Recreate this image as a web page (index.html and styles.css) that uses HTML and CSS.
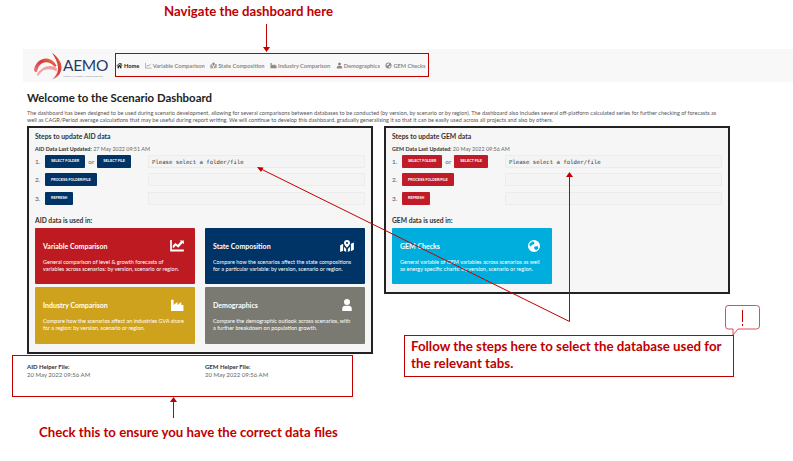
FILE: index.html
```html
<!DOCTYPE html>
<html lang="en">
<head>
    <meta charset="UTF-8">
    <title>Scenario Dashboard</title>
    <link rel="stylesheet" href="styles.css">
</head>
<body>

    <div class="navbar">
        <div class="logo">
            <svg class="logo-mark" viewBox="0 0 32 30">
                <defs>
                    <linearGradient id="swoosh" x1="0" y1="1" x2="1" y2="0">
                        <stop offset="0" stop-color="#e9808a"/>
                        <stop offset="0.55" stop-color="#d8343c"/>
                        <stop offset="1" stop-color="#f08a3c"/>
                    </linearGradient>
                </defs>
                <path d="M20 2C25 5 30 11 29.500 17C29 23 25 27 20 28.500C24 25 26.500 21 26 16C25.500 11 23 6 20 2Z" fill="url(#swoosh)"/>
                <path d="M2 19C3 12 8 8 14 7.500C18 7.500 22 10 24.500 14.500L23 16C20 12.500 16 10.500 12 11.500C8 12.500 6 16 5 21C3.500 21.500 2 20.500 2 19Z" fill="url(#swoosh)"/>
                <path d="M5 23.500C8 18 13 15 18 15C21 15 23.500 16 25 17.500L24.500 20.500C21 18 16 17.500 12 19C10 20 8 22 6.500 24.500C6 25 5 24.500 5 23.500Z" fill="#eea0a0"/>
            </svg>
            <div class="logo-text">
                <span class="logo-name">AEMO</span>
                <span class="logo-sub">AUSTRALIAN ENERGY MARKET OPERATOR</span>
            </div>
        </div>
        <div class="nav-links">
            <a class="nav-link active">
                <svg class="nav-icon" viewBox="0 0 16 16"><path d="M8 2L1 8.500L2 9.500L8 4L14 9.500L15 8.500L12.500 6V2.500H10.500V4.200ZM3.500 10V14.500H7V11H9V14.500H12.500V10L8 5.800Z"/></svg>Home
            </a>
            <a class="nav-link">
                <svg class="nav-icon" viewBox="0 0 16 16"><path d="M1 2V14H15" fill="none" stroke="currentColor" stroke-width="1.400"/><path d="M3.500 11L6.500 7L9 9L13.500 4" fill="none" stroke="currentColor" stroke-width="1.400"/></svg>Variable Comparison
            </a>
            <a class="nav-link">
                <svg class="nav-icon" viewBox="0 0 16 16"><path d="M8 1A3 3 0 0 0 5 4C5 6 8 9 8 9C8 9 11 6 11 4A3 3 0 0 0 8 1ZM1 6L4 5V14L1 15ZM5 8L7 10V15L5 14ZM9 10L11 8V14L9 15ZM12 5L15 4V13L12 14Z"/></svg>State Composition
            </a>
            <a class="nav-link">
                <svg class="nav-icon" viewBox="0 0 16 16"><path d="M1 2H4V8L8 5V8L12 5V8H15V14H1Z"/></svg>Industry Comparison
            </a>
            <a class="nav-link">
                <svg class="nav-icon" viewBox="0 0 16 16"><circle cx="8" cy="4.500" r="3.500"/><path d="M2 15V12C2 10 4 9 5.500 9H10.500C12 9 14 10 14 12V15Z"/></svg>Demographics
            </a>
            <a class="nav-link">
                <svg class="nav-icon" viewBox="0 0 16 16"><path fill-rule="evenodd" d="M8 1A7 7 0 1 0 8 15A7 7 0 0 0 8 1ZM4 5L8 3L10 4L9 6L7 6.500L5.500 8.500L3.500 7.500ZM9 9L13 8.500L12.500 11.500L10 13L8.500 11.500Z"/></svg>GEM Checks
            </a>
        </div>
    </div>

    <div class="content">
        <h1>Welcome to the Scenario Dashboard</h1>
        <p class="intro">The dashboard has been designed to be used during scenario development, allowing for several comparisons between databases to be conducted (by version, by scenario or by region). The dashboard also includes several off-platform calculated series for further checking of forecasts as well as CAGR/Period average calculations that may be useful during report writing. We will continue to develop this dashboard, gradually generalising it so that it can be easily used across all projects and also by others.</p>

        <div class="panels">
            <div class="panel">
                <h3>Steps to update AID data</h3>
                <p class="updated"><b>AID Data Last Updated:</b> 27 May 2022 09:51 AM</p>
                <div class="steps">
                    <div class="step"><span class="num">1.</span><a class="btn">SELECT FOLDER</a><span class="or">or</span><a class="btn">SELECT FILE</a></div>
                    <div class="output">Please select a folder/file</div>
                    <div class="step"><span class="num">2.</span><a class="btn">PROCESS FOLDER/FILE</a></div>
                    <div class="output"></div>
                    <div class="step"><span class="num">3.</span><a class="btn">REFRESH</a></div>
                    <div class="output"></div>
                </div>
                <h4>AID data is used in:</h4>
                <div class="cards">
                    <div class="card red">
                        <div class="card-head">
                            <span>Variable Comparison</span>
                            <svg class="card-icon" viewBox="0 0 16 14"><path d="M0 0H2V11H16V13.500H0Z"/><path d="M3 9V6.500L6 3.500L9 5.500L12.500 1.500L11 0.500H16V5L14.500 3.500L9.500 9L6.500 6.500L4.500 9Z"/></svg>
                        </div>
                        <p>General comparison of level &amp; growth forecasts of variables across scenarios: by version, scenario or region.</p>
                    </div>
                    <div class="card blue">
                        <div class="card-head">
                            <span>State Composition</span>
                            <svg class="card-icon" viewBox="0 0 16 14"><path fill-rule="evenodd" d="M8 0A3.500 3.500 0 0 0 4.500 3.500C4.500 5.500 8 9 8 9C8 9 11.500 5.500 11.500 3.500A3.500 3.500 0 0 0 8 0ZM8 2.300A1.200 1.200 0 1 1 8 4.700A1.200 1.200 0 0 1 8 2.300Z"/><path d="M0 6L3.500 4.500V12.500L0 14ZM4.500 8L7 10.500V14L4.500 12.500ZM9 10.500L11.500 8V12.500L9 14ZM12.500 4.500L16 3V11.500L12.500 13Z"/></svg>
                        </div>
                        <p>Compare how the scenarios affect the state compositions for a particular variable: by version, scenario or region.</p>
                    </div>
                    <div class="card gold">
                        <div class="card-head">
                            <span>Industry Comparison</span>
                            <svg class="card-icon" viewBox="0 0 16 14"><path d="M1 1H4V7L8.500 3.500V7L13 3.500V7H15.500V14H1Z"/></svg>
                        </div>
                        <p>Compare how the scenarios affect an industries GVA share for a region: by version, scenario or region.</p>
                    </div>
                    <div class="card grey">
                        <div class="card-head">
                            <span>Demographics</span>
                            <svg class="card-icon" viewBox="0 0 16 14"><circle cx="8" cy="3.500" r="3.500"/><path d="M2.500 14V11C2.500 9 4 8 5.500 8H10.500C12 8 13.500 9 13.500 11V14Z"/></svg>
                        </div>
                        <p>Compare the demographic outlook across scenarios, with a further breakdown on population growth.</p>
                    </div>
                </div>
            </div>

            <div class="panel">
                <h3>Steps to update GEM data</h3>
                <p class="updated"><b>GEM Data Last Updated:</b> 20 May 2022 09:56 AM</p>
                <div class="steps red-btns">
                    <div class="step"><span class="num">1.</span><a class="btn">SELECT FOLDER</a><span class="or">or</span><a class="btn">SELECT FILE</a></div>
                    <div class="output">Please select a folder/file</div>
                    <div class="step"><span class="num">2.</span><a class="btn">PROCESS FOLDER/FILE</a></div>
                    <div class="output"></div>
                    <div class="step"><span class="num">3.</span><a class="btn">REFRESH</a></div>
                    <div class="output"></div>
                </div>
                <h4>GEM data is used in:</h4>
                <div class="cards">
                    <div class="card cyan">
                        <div class="card-head">
                            <span>GEM Checks</span>
                            <svg class="card-icon" viewBox="0 0 16 14"><path fill-rule="evenodd" d="M8 0A7 7 0 1 0 8 14A7 7 0 0 0 8 0ZM3 4L6.500 1.500L8.500 2.500L8 5L5.500 5.500L4.500 7.500L2.500 6.500ZM8 8L12.500 7L13 10L10.500 12L8.500 10.500Z"/></svg>
                        </div>
                        <p>General variable of GEM variables across scenarios as well as energy specific charts: by version, scenario or region.</p>
                    </div>
                </div>
            </div>
        </div>

        <div class="helpers">
            <div class="helper"><b>AID Helper File:</b><span>20 May 2022 09:56 AM</span></div>
            <div class="helper"><b>GEM Helper File:</b><span>20 May 2022 09:56 AM</span></div>
        </div>
    </div>

    <!-- annotations drawn on top of the screenshot -->
    <div class="note note-nav">Navigate the dashboard here</div>
    <div class="note note-check">Check this to ensure you have the correct data files</div>
    <div class="frame frame-nav"></div>
    <div class="frame frame-helper"></div>
    <div class="callout">Follow the steps here to select the database used for the relevant tabs.</div>

    <svg class="arrows" viewBox="0 0 793 461">
        <g fill="none" stroke="#c00000" stroke-width="1">
            <path d="M266.500 24V47"/>
            <path d="M173.500 418V402"/>
            <path d="M569.500 321.500V177"/>
            <path d="M569.500 321.500L262 169.500"/>
        </g>
        <g fill="#c00000">
            <path d="M263 47H270L266.500 52Z"/>
            <path d="M170 402H177L173.500 397Z"/>
            <path d="M566 177H573L569.500 172Z"/>
            <path d="M257 167L263.500 167.500L261 172Z"/>
        </g>
        <path d="M728 305.500H756.500Q759.500 305.500 759.500 308.500V326Q759.500 329 756.500 329H738L733 335L733 329H728Q725.500 329 725.500 326V308.500Q725.500 305.500 728 305.500Z" fill="#fff" stroke="#d9505a" stroke-width="1"/>
        <path d="M742.500 310V322M742.500 324V326" stroke="#c00000" stroke-width="1" fill="none"/>
    </svg>

</body>
</html>
```

FILE: styles.css
```css
body {
    margin: 0;
    width: 793px;
    height: 461px;
    overflow: hidden;
    position: relative;
    background: white;
    font-family: Lato, "Open Sans", sans-serif;
    color: #333;
}
.navbar {
    display: flex;
    align-items: center;
    height: 33px;
    margin: 49px 0 0 23px;
    background: #f8f8f8;
}
.logo {
    display: flex;
    align-items: center;
    width: 93px;
    padding-left: 9px;
    box-sizing: border-box;
}
.logo-mark {
    width: 32px;
    height: 30px;
    flex: none;
}
.logo-text {
    display: flex;
    flex-direction: column;
    margin-left: -1px;
    padding-top: 5px;
}
.logo-name {
    font-size: 15.500px;
    line-height: 13px;
    letter-spacing: -0.300px;
    color: #26396b;
}
.logo-sub {
    margin-top: 3px;
    font-size: 2px;
    line-height: 3px;
    color: #7a7f90;
    white-space: nowrap;
}
.nav-links {
    display: flex;
    gap: 5.500px;
}
.nav-link {
    display: flex;
    align-items: center;
    gap: 1px;
    font-size: 5.650px;
    font-weight: bold;
    color: #8a8a8a;
    white-space: nowrap;
}
.nav-link.active {
    color: #222;
}
.nav-icon {
    width: 7px;
    height: 7px;
    fill: currentColor;
}
.content {
    padding-left: 27px;
}
h1 {
    margin: 9px 0 0;
    font-size: 11.400px;
    line-height: 13px;
    color: #222;
}
.intro {
    width: 700px;
    margin: 6px 0 0;
    font-size: 5.550px;
    line-height: 7.300px;
    color: #555;
}
.panels {
    display: flex;
    align-items: flex-start;
    gap: 11px;
    margin-top: 1px;
}
.panel {
    width: 346px;
    box-sizing: border-box;
    padding: 4px 6px 8px;
    background: #f6f6f6;
    border: 2px solid #222;
}
h3 {
    margin: 0;
    font-size: 6.800px;
    line-height: 9px;
    color: #333;
}
.updated {
    margin: 4px 0 0;
    font-size: 5.400px;
    line-height: 8px;
    color: #666;
}
.updated b {
    color: #333;
}
.steps {
    display: grid;
    grid-template-columns: 113px 217px;
    grid-auto-rows: 13px;
    row-gap: 5.500px;
    margin-top: 2px;
}
.step {
    display: flex;
    align-items: center;
}
.num {
    width: 10px;
    font-size: 6.500px;
    color: #555;
}
.or {
    margin: 0 3px;
    font-size: 6.500px;
    color: #666;
}
.btn {
    display: flex;
    align-items: center;
    height: 13px;
    padding: 0 6px;
    border-radius: 1px;
    background: #003366;
    color: white;
    font-family: "Liberation Sans", sans-serif;
    font-size: 3.400px;
    font-weight: bold;
    white-space: nowrap;
}
.red-btns .btn {
    background: #bf1b28;
}
.output {
    padding-left: 3px;
    background: #f4f4f4;
    border: 1px solid #ececec;
    border-radius: 1px;
    font-family: "DejaVu Sans Mono", "Liberation Mono", monospace;
    font-size: 5.650px;
    line-height: 12px;
    color: #333;
}
h4 {
    margin: 11px 0 0;
    font-size: 6.700px;
    line-height: 9px;
    color: #333;
}
.cards {
    display: grid;
    grid-template-columns: 160px 160px;
    grid-auto-rows: 56.500px;
    gap: 3px 10px;
    margin-top: 3px;
}
.card {
    padding: 12px 8px 0;
    border-radius: 1px;
    color: white;
}
.card-head {
    display: flex;
    justify-content: space-between;
    align-items: center;
    height: 12px;
    font-size: 7px;
    font-weight: bold;
}
.card-icon {
    width: 14px;
    height: 12px;
    margin-right: 3px;
    fill: white;
}
.card p {
    margin: 7px 0 0;
    padding-right: 2.500px;
    font-size: 5.500px;
    line-height: 7.200px;
}
.red { background: #be1a22; }
.blue { background: #003366; }
.gold { background: #cfa21d; }
.grey { background: #7a7a72; }
.cyan { background: #00aede; }
.helpers {
    display: flex;
    margin-top: 9px;
}
.helper {
    display: flex;
    flex-direction: column;
    width: 178px;
    font-size: 6px;
    line-height: 8px;
    color: #666;
}
.helper b {
    color: #333;
}
.note {
    position: absolute;
    font-size: 13.200px;
    font-weight: bold;
    color: #c00000;
    white-space: nowrap;
}
.note-nav {
    left: 164px;
    top: 3px;
}
.note-check {
    left: 39px;
    top: 424px;
}
.frame {
    position: absolute;
    box-sizing: border-box;
    border: 1px solid #c00000;
}
.frame-nav {
    left: 115px;
    top: 53px;
    width: 314px;
    height: 24px;
}
.frame-helper {
    left: 12px;
    top: 355px;
    width: 341px;
    height: 42px;
}
.callout {
    position: absolute;
    left: 404px;
    top: 335px;
    width: 330px;
    height: 42px;
    box-sizing: border-box;
    padding: 1.500px 6px;
    background: white;
    border: 1px solid #c00000;
    font-size: 13.300px;
    font-weight: bold;
    line-height: 17px;
    color: #c00000;
}
.arrows {
    position: absolute;
    left: 0;
    top: 0;
    width: 793px;
    height: 461px;
    pointer-events: none;
}
```
